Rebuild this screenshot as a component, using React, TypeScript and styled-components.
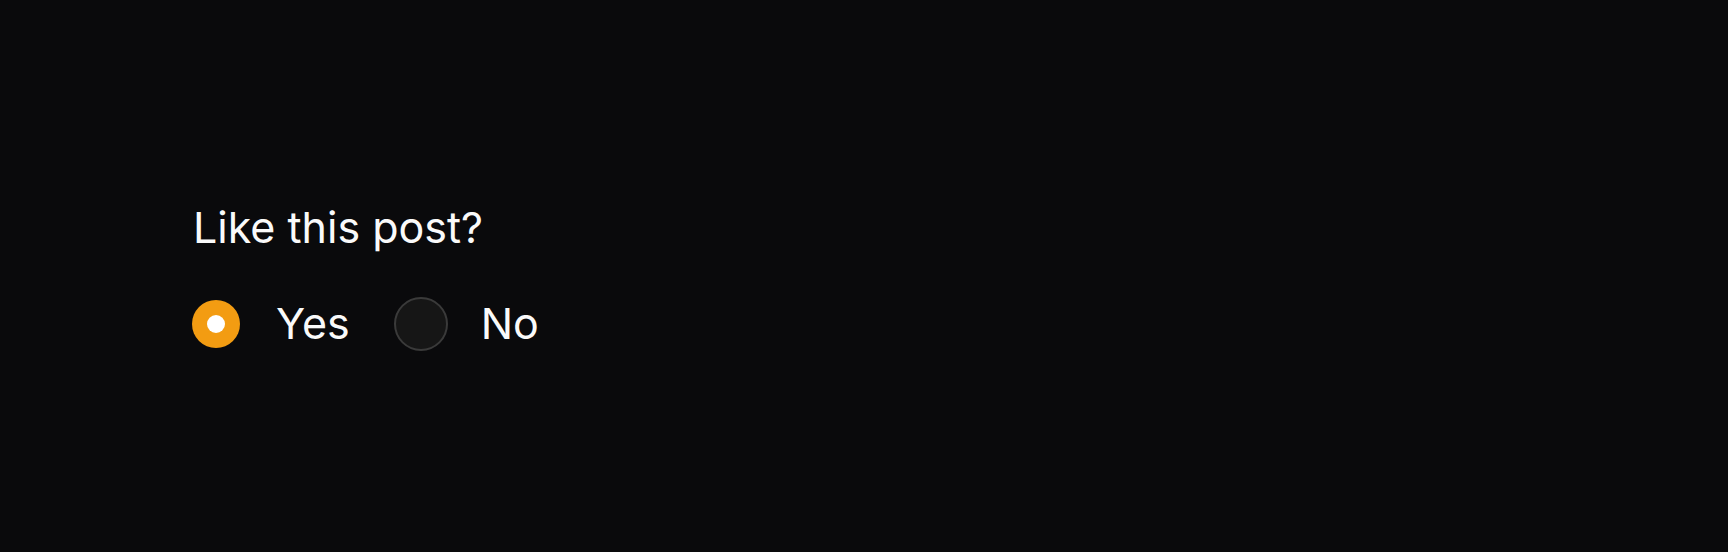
import React, { useState } from 'react';
import styled, { createGlobalStyle } from 'styled-components';

const GlobalStyle = createGlobalStyle`
  html, body {
    margin: 0;
    padding: 0;
    background: #0a0a0c;
  }
  body {
    font-family: Inter, "Noto Sans", sans-serif;
    color: #fafafa;
  }
`;

const Page = styled.div`
  width: 1728px;
  height: 552px;
  box-sizing: border-box;
  padding: 201px 0 0 193px;
  background: #0a0a0c;
`;

const Question = styled.div`
  font-size: 43px;
  line-height: 52px;
  font-weight: 400;
  margin: 0 0 44px 0;
`;

const Group = styled.div`
  display: flex;
  align-items: center;
  height: 54px;
  margin-left: -1px;
`;

const Option = styled.label`
  display: flex;
  align-items: center;
  cursor: pointer;
  margin-right: 44px;
`;

const Dot: any = styled.span`
  box-sizing: border-box;
  display: flex;
  align-items: center;
  justify-content: center;
  flex-shrink: 0;
  border-radius: 50%;
  width: ${(p: any) => (p.checked ? '48px' : '54px')};
  height: ${(p: any) => (p.checked ? '48px' : '54px')};
  background: ${(p: any) => (p.checked ? '#f39c12' : '#161616')};
  border: ${(p: any) => (p.checked ? 'none' : '2px solid #3a3a3a')};

  &::after {
    content: '';
    display: ${(p: any) => (p.checked ? 'block' : 'none')};
    width: 18px;
    height: 18px;
    border-radius: 50%;
    background: #ffffff;
  }
`;

const Label: any = styled.span`
  font-size: 43px;
  line-height: 52px;
  padding-bottom: 2px;
  margin-left: ${(p: any) => (p.checked ? '36px' : '33px')};
`;

const options = ['Yes', 'No'];

export default function App() {
  const [value, setValue] = useState('Yes');

  return (
    <>
      <GlobalStyle />
      <Page>
        <Question>Like this post?</Question>
        <Group>
          {options.map((option: string) => (
            <Option key={option} onClick={() => setValue(option)}>
              <Dot checked={value === option} />
              <Label checked={value === option}>{option}</Label>
            </Option>
          ))}
        </Group>
      </Page>
    </>
  );
}
